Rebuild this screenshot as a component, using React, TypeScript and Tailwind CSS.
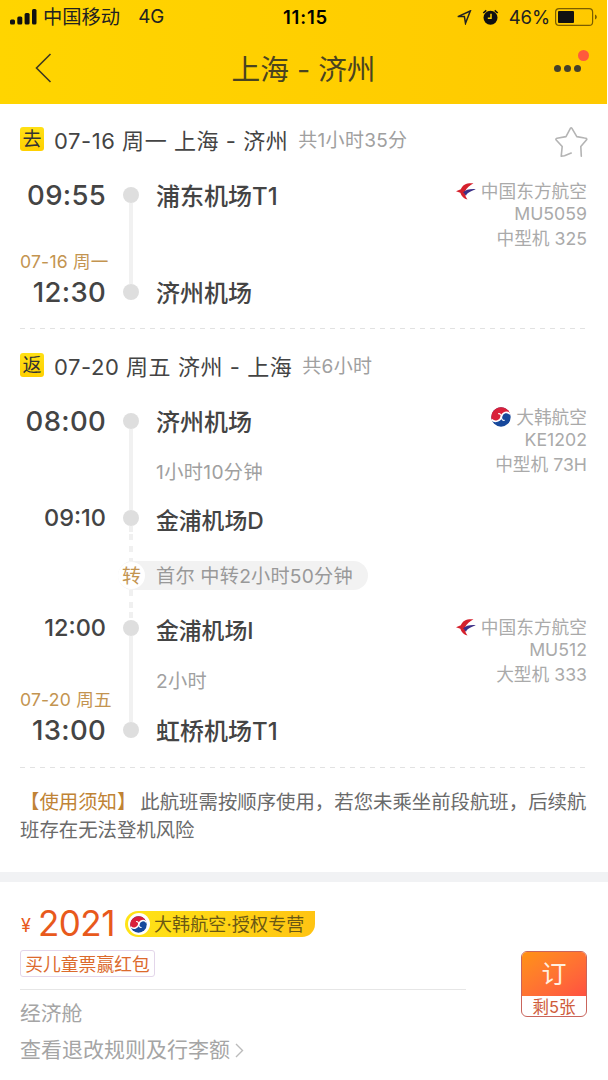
import type { ReactNode } from "react";

function Badge({ children }: { children: ReactNode }) {
  return (
    <span className="flex h-[24px] w-[24px] shrink-0 items-center justify-center rounded-[3px] bg-linear-to-b from-[#ffe014] to-[#ffd000] text-[19px] leading-none text-[#333]">
      {children}
    </span>
  );
}

function LegHeader({ badge, title, total, star }: { badge: string; title: ReactNode; total: string; star?: boolean }) {
  return (
    <div className="flex h-[28px] items-center">
      <Badge>{badge}</Badge>
      <span className="ml-[10px] pt-[4px] text-[22px] leading-[28px] tracking-[0.550px] whitespace-pre text-[#444]">{title}</span>
      <span className="ml-[10px] pt-[4px] text-[19px] leading-[28px] tracking-[0.300px] whitespace-nowrap text-[#a0a0a0]">{total}</span>
      {star && (
        <svg className="mt-[5px] ml-auto h-[32px] w-[34px]" viewBox="0 0 34 32" fill="none" stroke="#b4b4b4" strokeWidth="1.6" strokeLinejoin="round" strokeLinecap="round">
          <path d="M27.3 30.3 26.8 20.5 32.8 13.5Q32.8 12 30.500 12L22.800 10.600 17.800 2.200Q17.200 1.300 16.500 2.200L12 10.600 3 12.200Q1.300 12.800 2.200 14L8.200 20.500 7.200 30.300 10.500 29.800 17.200 27" />
        </svg>
      )}
    </div>
  );
}

type Line = "none" | "solid" | "dotted";

const lineClass: Record<Line, string> = {
  none: "w-[4px] flex-1",
  solid: "w-[4px] flex-1 bg-[#f1f1f1]",
  dotted: "w-[4px] flex-1 bg-[repeating-linear-gradient(to_bottom,#f0f0f0_0px,#f0f0f0_6px,#fff_6px,#fff_12px)]",
};

function Stop({ time, name, above, below, small }: { time: string; name: string; above: Line; below: Line; small?: boolean }) {
  return (
    <div className="flex h-[32px] items-center">
      <div
        className={
          small
            ? "w-[86px] text-right text-[23.500px] leading-[32px] font-[450] text-[#444]"
            : "w-[86px] text-right text-[27.500px] leading-[32px] font-[450] tracking-[0.300px] text-[#444]"
        }
      >
        {time}
      </div>
      <div className="ml-[17px] flex h-full w-[16px] flex-col items-center">
        <div className={lineClass[above]} />
        <div className="h-[16px] w-[16px] rounded-full bg-[#dedede]" />
        <div className={lineClass[below]} />
      </div>
      <div
        className={
          small
            ? "ml-[17px] pt-[6px] text-[22.800px] leading-[32px] font-medium whitespace-nowrap text-[#444]"
            : "ml-[17px] pt-[3px] text-[24px] leading-[32px] font-medium whitespace-nowrap text-[#444]"
        }
      >
        {name}
      </div>
    </div>
  );
}

function Between({ height, note, date, line = "solid" }: { height: string; note?: string; date?: string; line?: Line }) {
  return (
    <div className={"flex " + height}>
      <div className="flex w-[86px] flex-col justify-end">
        {date && <span className="text-[17.600px] leading-[28px] tracking-[0.200px] whitespace-nowrap text-[#c39450]">{date}</span>}
      </div>
      <div className="ml-[17px] flex w-[16px] flex-col items-center">
        <div className={lineClass[line]} />
      </div>
      <div className="ml-[17px] flex flex-col justify-center pt-[4px]">
        {note && <span className="text-[19.200px] leading-[28px] tracking-[0.350px] whitespace-nowrap text-[#a0a0a0]">{note}</span>}
      </div>
    </div>
  );
}

function EasternLogo() {
  return (
    <svg className="h-[17px] w-[20px]" viewBox="0 0 20 17">
      <path d="M17.500 0.300C11 -0.300 6.500 1.500 4.800 6.300L0 8.300 4.300 9.800C5.500 13.500 8 16 11.500 16.500 9.300 13.500 9 12 9.600 10.300L9 8.300C11 4.500 13.500 2.500 17.500 0.300Z" fill="#d5202c" />
      <path d="M19.800 6.200C14 5.800 9.500 6.800 7 9.500 8.500 10 8.500 11.500 10 12.800 11 9.800 14.500 8.200 19.800 6.200Z" fill="#3b2f86" />
    </svg>
  );
}

function KoreanLogo({ className }: { className: string }) {
  return (
    <svg className={className} viewBox="0 0 20 20">
      <circle cx="10" cy="10" r="9.700" fill="#17489b" />
      <path d="M0.600 12.500A9.700 9.700 0 0 1 19.400 7.500C16.500 4 11.500 5 10.500 9.500 9.500 14 4 16 0.600 12.500Z" fill="#d9203a" />
      <path d="M0.700 12.700C4 16 9.500 14 10.400 9.700 11.400 5 16.400 4 19.300 7.300" fill="none" stroke="#fff" strokeWidth="1.700" />
      <path d="M10.200 10.500C10.600 8 9.300 6.300 7.200 6.600M10.600 9.500C10.200 12 11.500 13.700 13.600 13.400" fill="none" stroke="#fff" strokeWidth="1.200" />
    </svg>
  );
}

function Carrier({ logo, name, flight, plane }: { logo: ReactNode; name: string; flight: string; plane: string }) {
  return (
    <div className="mr-[1px] flex flex-col items-end text-[17.700px] text-[#aaa]">
      <div className="flex h-[24px] items-center gap-[5px] whitespace-nowrap">
        {logo}
        <span className="pt-[2px] leading-[24px]">{name}</span>
      </div>
      <span className="leading-[21px]">{flight}</span>
      <span className="mt-[1px] leading-[27px] whitespace-nowrap">{plane}</span>
    </div>
  );
}

function Dashes() {
  return <div className="h-[1px] bg-[repeating-linear-gradient(to_right,#e2e2e2_0px,#e2e2e2_5px,#fff_5px,#fff_10px)]" />;
}

function StatusBar() {
  return (
    <div className="grid h-[34px] grid-cols-[1fr_auto_1fr] items-center pr-[9px] pl-[10px] text-black">
      <div className="flex items-center">
        <svg className="h-[17px] w-[27px]" viewBox="0 0 27 17" fill="#111">
          <rect x="0" y="10.500" width="5" height="5" rx="1.500" />
          <rect x="7.300" y="7.500" width="5" height="8" rx="1.500" />
          <rect x="14.600" y="4" width="5" height="11.500" rx="1.500" />
          <rect x="22" y="0" width="4.500" height="15.500" rx="1.500" />
        </svg>
        <span className="ml-[6px] text-[19.300px] leading-[34px] text-[#222]">中国移动</span>
        <span className="ml-[18px] text-[18.800px] leading-[34px] text-[#222]">4G</span>
      </div>
      <span className="mr-[-3px] text-[18.500px] leading-[34px] font-semibold tracking-[0.800px]">11:15</span>
      <div className="flex items-center justify-end">
        <svg className="h-[15px] w-[16px]" viewBox="0 0 16 15" fill="none" stroke="#222" strokeWidth="1.500" strokeLinejoin="miter">
          <path d="M14.300 1 1.800 6.600H8.400L9.500 13.300Z" />
        </svg>
        <svg className="ml-[10px] h-[17px] w-[17px]" viewBox="0 0 17 17">
          <circle cx="8.500" cy="8.800" r="7" fill="#111" />
          <path d="M1.300 4 4.300 1.300M15.700 4 12.700 1.300" stroke="#111" strokeWidth="1.600" />
          <path d="M9 4.800V9.300H5.800" stroke="#ffd000" strokeWidth="1.500" fill="none" />
        </svg>
        <span className="ml-[10px] text-[18.500px] leading-[34px] tracking-[-0.100px] text-[#222]">46%</span>
        <svg className="ml-[5px] h-[18px] w-[43px]" viewBox="0 0 43 18">
          <rect x="0.600" y="0.600" width="37" height="16.800" rx="3.500" fill="none" stroke="#7a5d00" strokeWidth="1.200" />
          <rect x="3" y="3" width="16" height="12" rx="1" fill="#111" />
          <path d="M40 6.500C42.400 7.500 42.400 10.500 40 11.500Z" fill="#7a5d00" />
        </svg>
      </div>
    </div>
  );
}

export default function App() {
  return (
    <div className="h-[1080px] w-[608px] overflow-hidden bg-white font-['Inter','Noto_Sans_CJK_SC',sans-serif]">
      <header className="mr-[1px] h-[104px] bg-linear-to-r from-[#ffd500] to-[#ffc900]">
        <StatusBar />
        <div className="grid h-[70px] grid-cols-[1fr_auto_1fr] items-center pr-[26px] pl-[35px]">
          <svg className="mb-[2px] h-[30px] w-[17px]" viewBox="0 0 17 30" fill="none" stroke="#3f3a20" strokeWidth="1.600">
            <path d="M15.500 1 1.500 15 15.500 29" />
          </svg>
          <h1 className="mr-[9px] pt-[2px] text-[28.700px] leading-[40px] whitespace-pre text-[#4a4320]">上海 - 济州</h1>
          <div className="relative mb-[2px] flex gap-[3px] justify-self-end">
            <i className="h-[7px] w-[7px] rounded-full bg-[#45412a]" />
            <i className="h-[7px] w-[7px] rounded-full bg-[#45412a]" />
            <i className="h-[7px] w-[7px] rounded-full bg-[#45412a]" />
            <i className="absolute -top-[15px] -right-[8px] h-[11px] w-[11px] rounded-full bg-[#ff5a3c]" />
          </div>
        </div>
      </header>

      <main className="px-[20px]">
        <section className="h-[224px] pt-[21px]">
          <LegHeader badge="去" title="07-16 周一 上海 - 济州" total="共1小时35分" star />
          <div className="mt-[26px] flex justify-between">
            <div>
              <Stop time="09:55" name="浦东机场T1" above="none" below="solid" />
              <Between height="h-[65px]" date="07-16 周一" />
              <Stop time="12:30" name="济州机场" above="solid" below="none" />
            </div>
            <Carrier logo={<EasternLogo />} name="中国东方航空" flight="MU5059" plane="中型机 325" />
          </div>
        </section>
        <Dashes />
        <section className="h-[438px] pt-[22px]">
          <LegHeader badge="返" title="07-20 周五 济州 - 上海" total="共6小时" />
          <div className="mt-[26px] flex justify-between">
            <div>
              <Stop time="08:00" name="济州机场" above="none" below="solid" />
              <Between height="h-[65px]" note="1小时10分钟" />
              <Stop time="09:10" name="金浦机场D" above="solid" below="dotted" small />
              <div className="flex h-[78px] flex-col">
                <div className="ml-[103px] flex h-[27px] w-[16px] flex-col items-center">
                  <div className={lineClass.dotted} />
                </div>
                <div className="ml-[98px] flex h-[29px] w-[250px] items-center rounded-full bg-[#f2f2f2]">
                  <span className="flex h-[27px] w-[27px] items-center justify-center rounded-full bg-white pt-[1px] text-[19px] leading-none text-[#c39450]">转</span>
                  <span className="ml-[11px] pt-[2px] text-[19.200px] leading-[29px] tracking-[0.200px] whitespace-nowrap text-[#999]">首尔 中转2小时50分钟</span>
                </div>
                <div className="ml-[103px] flex h-[22px] w-[16px] flex-col items-center">
                  <div className={lineClass.dotted} />
                </div>
              </div>
              <Stop time="12:00" name="金浦机场I" above="dotted" below="solid" small />
              <Between height="h-[70px]" note="2小时" date="07-20 周五" />
              <Stop time="13:00" name="虹桥机场T1" above="solid" below="none" />
            </div>
            <div className="flex flex-col gap-[137px]">
              <Carrier logo={<KoreanLogo className="h-[20px] w-[20px]" />} name="大韩航空" flight="KE1202" plane="中型机 73H" />
              <Carrier logo={<EasternLogo />} name="中国东方航空" flight="MU512" plane="大型机 333" />
            </div>
          </div>
        </section>
        <Dashes />
        <p className="h-[104px] w-[568px] pt-[20px] text-[19.400px] leading-[28px] whitespace-nowrap text-[#6a6a6a]">
          <span className="text-[#c08335]">【使用须知】</span>
          <span className="ml-[4px]">此航班需按顺序使用，若您未乘坐前段航班，后续航</span>
          <br />
          班存在无法登机风险
        </p>
      </main>

      <div className="h-[10px] bg-[#f1f2f4]" />

      <section className="flex h-[198px] justify-between pr-[21px] pl-[20px]">
        <div className="w-[446px]">
          <div className="flex h-[68px] items-center pt-[16px]">
            <span className="ml-[1px] pt-[3px] text-[18px] leading-none text-[#e8591c]">¥</span>
            <span className="mt-[-2px] ml-[7px] w-[87px] text-[35px] leading-[38px] tracking-[-0.500px] text-[#e8591c]">2021</span>
            <span className="flex h-[26px] w-[190px] items-center rounded-l-full rounded-br-full bg-linear-to-r from-[#ffe417] to-[#ffc413] whitespace-nowrap">
              <span className="ml-[3px] flex h-[22px] w-[22px] items-center justify-center rounded-full bg-white">
                <KoreanLogo className="h-[17px] w-[17px]" />
              </span>
              <span className="ml-[4px] pt-[2px] text-[18px] leading-[26px] tracking-[0.150px] text-[#6b5814]">大韩航空·授权专营</span>
            </span>
          </div>
          <div className="flex h-[27px] w-[135px] items-center justify-center rounded-[3px] border border-[#e3d6ea] pt-[2px] text-[17.800px] leading-[25px] whitespace-nowrap text-[#dc6a2c]">
            买儿童票赢红包
          </div>
          <div className="mt-[12px] h-[1px] bg-[#e6e6e6]" />
          <div className="mt-[9px] text-[20.800px] leading-[30px] text-[#a5a5a5]">经济舱</div>
          <div className="mt-[6px] flex items-center text-[21px] leading-[30px] text-[#a5a5a5]">
            查看退改规则及行李额
            <svg className="ml-[5px] h-[15px] w-[9px]" viewBox="0 0 9 15" fill="none" stroke="#bbb" strokeWidth="1.400">
              <path d="M1 1 7.500 7.500 1 14" />
            </svg>
          </div>
        </div>
        <button className="mt-[69px] flex h-[66px] w-[66px] flex-col overflow-hidden rounded-[6px] border border-[#c9655c] bg-white">
          <span className="flex h-[44px] w-full shrink-0 items-center justify-center bg-linear-to-br from-[#ff9210] to-[#ff5040] text-[25px] leading-none text-[#fff0e0]">订</span>
          <span className="w-full text-center text-[16.500px] leading-[22px] text-[#cf5b3a]">剩5张</span>
        </button>
      </section>
    </div>
  );
}
